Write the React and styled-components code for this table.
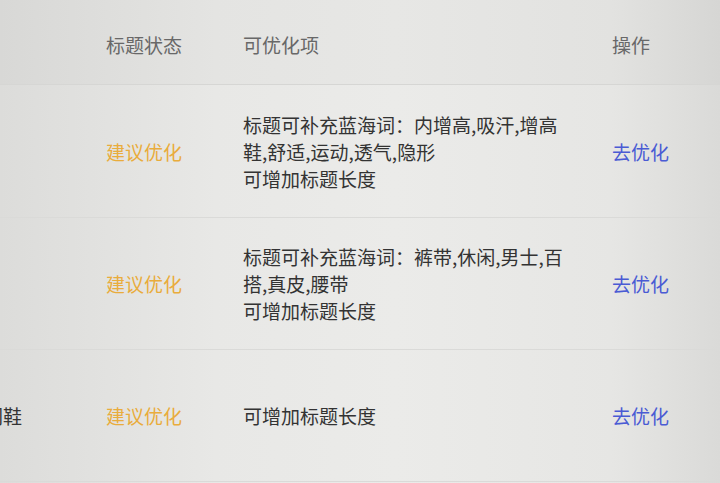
import React from "react";
import styled, { createGlobalStyle } from "styled-components";

const GlobalStyle = createGlobalStyle`
  html, body {
    margin: 0;
    padding: 0;
    height: 100%;
  }
  body {
    font-family: "Noto Sans CJK SC", "Noto Sans", sans-serif;
    background: linear-gradient(90deg, #dcdcda 0%, #e8e8e6 30%, #ebebe9 55%, #e6e6e4 85%, #dadad8 100%);
    overflow: hidden;
  }
`;

const rows = [
  {
    name: "",
    status: "建议优化",
    tips: ["标题可补充蓝海词：内增高,吸汗,增高鞋,舒适,运动,透气,隐形", "可增加标题长度"],
  },
  {
    name: "",
    status: "建议优化",
    tips: ["标题可补充蓝海词：裤带,休闲,男士,百搭,真皮,腰带", "可增加标题长度"],
  },
  {
    name: "男士休闲鞋",
    status: "建议优化",
    tips: ["可增加标题长度"],
  },
];

const Table = styled.div`
  width: 720px;
  height: 483px;
  display: flex;
  flex-direction: column;
`;

const Row = styled.div`
  display: grid;
  grid-template-columns: 106px 137px 369px 1fr;
  align-items: center;
  height: ${(p) => p.$h}px;
  flex-shrink: 0;
  border-bottom: 1px solid ${(p) => (p.$head ? "#d6d6d4" : "#dadad8")};
  background: ${(p) => (p.$head ? "rgba(0,0,0,0.015)" : "transparent")};
`;

const HeadCell = styled.div`
  font-size: 19px;
  color: #686868;
  padding-top: 4px;
`;

const NameCell = styled.div`
  display: flex;
  justify-content: flex-end;
  padding-right: 84px;
  overflow: hidden;
  white-space: nowrap;
  font-size: 19px;
  color: #333;
`;

const Status = styled.div`
  font-size: 19px;
  color: #e9ac3c;
`;

const Tips = styled.div`
  max-width: 328px;
  font-size: 19px;
  line-height: 27px;
  color: #333;
`;

const Action = styled.a`
  font-size: 19px;
  color: #4a5bd4;
  text-decoration: none;
  cursor: pointer;
`;

export default function App() {
  return (
    <>
      <GlobalStyle />
      <Table>
        <Row $head $h={84}>
          <div />
          <HeadCell>标题状态</HeadCell>
          <HeadCell>可优化项</HeadCell>
          <HeadCell>操作</HeadCell>
        </Row>
        {rows.map((r, i) => (
          <Row key={i} $h={i === 0 ? 132 : 131}>
            <NameCell>
              <span>{r.name}</span>
            </NameCell>
            <Status>{r.status}</Status>
            <Tips>
              {r.tips.map((t, j) => (
                <div key={j}>{t}</div>
              ))}
            </Tips>
            <div>
              <Action>去优化</Action>
            </div>
          </Row>
        ))}
      </Table>
    </>
  );
}
